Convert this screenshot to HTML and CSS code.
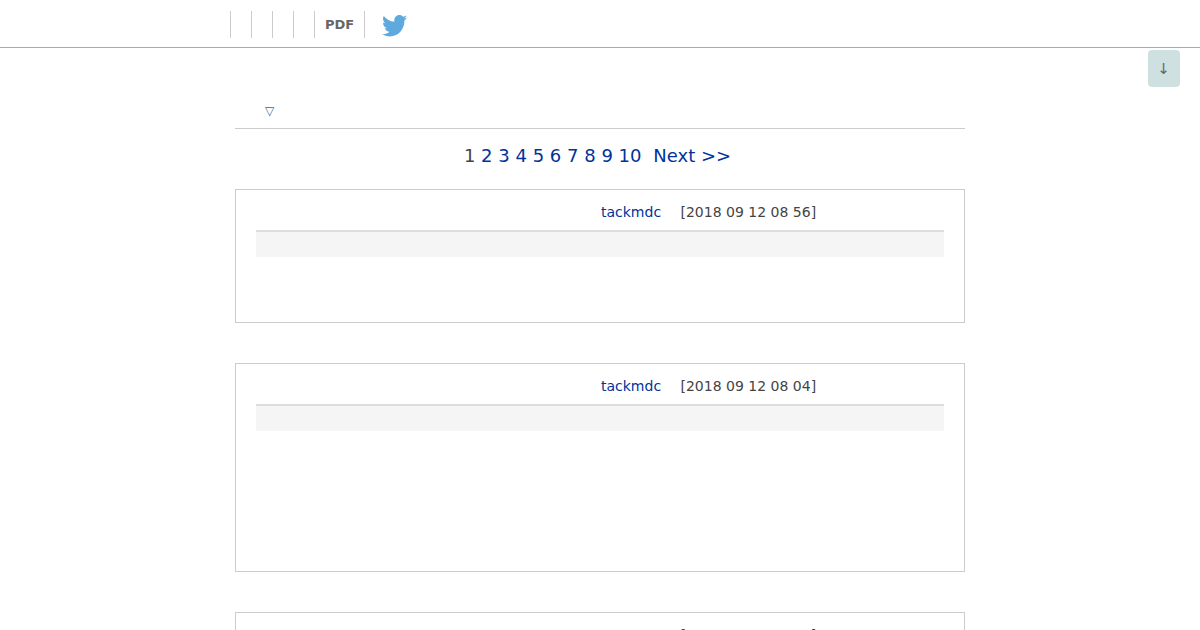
FILE: index.html
```html
<!DOCTYPE html>
<html lang="en">
<head>
<meta charset="utf-8">
<title>Forum</title>
<link rel="stylesheet" href="styles.css">
</head>
<body>
<header class="topbar">
  <nav class="topnav">
    <span class="cell"></span><span class="cell"></span><span class="cell"></span><span class="cell"></span>
    <span class="cell pdf">PDF</span>
    <span class="cell bird"><svg width="25" height="22" viewBox="0 0 24 20" preserveAspectRatio="none"><path fill="#5ea9dd" d="M24 2.4c-.9.4-1.8.7-2.8.8 1-.6 1.800-1.600 2.200-2.700-1 .6-2 1-3.100 1.200C19.300.700 18 .1 16.700.1c-2.700 0-4.900 2.200-4.900 4.900 0 .4 0 .8.100 1.100C7.800 5.900 4.200 4 1.700.9 1.200 1.600 1 2.500 1 3.400c0 1.700.9 3.200 2.200 4.100-.8 0-1.600-.2-2.200-.6v.1c0 2.400 1.700 4.400 3.900 4.800-.4.100-.8.200-1.300.2-.3 0-.6 0-.9-.1.600 2 2.400 3.400 4.600 3.400-1.700 1.300-3.800 2.100-6.100 2.100-.4 0-.8 0-1.200-.1 2.200 1.400 4.800 2.200 7.500 2.200 9.100 0 14-7.500 14-14v-.6c1-.7 1.800-1.600 2.500-2.500z"/></svg></span>
  </nav>
</header>
<button class="jump">↓</button>
<main class="page">
  <div class="sort"><span class="tri">▽</span></div>
  <div class="pager"><span>1</span> <a>2</a> <a>3</a> <a>4</a> <a>5</a> <a>6</a> <a>7</a> <a>8</a> <a>9</a> <a>10</a> <a class="next">Next &gt;&gt;</a></div>
  <article class="post short">
    <div class="meta"><a class="author">tackmdc</a><span>[2018 09 12 08 56]</span></div>
    <div class="band"></div>
  </article>
  <article class="post tall">
    <div class="meta"><a class="author">tackmdc</a><span>[2018 09 12 08 04]</span></div>
    <div class="band"></div>
  </article>
  <article class="post tall">
    <div class="meta"><a class="author"></a><span>[2018 09 12 08 00]</span></div>
    <div class="band"></div>
  </article>
</main>
</body>
</html>
```
FILE: styles.css
```css
html, body { margin: 0; padding: 0; height: 630px; overflow: hidden; background: #fff; font-family: "DejaVu Sans", sans-serif; }
.topbar { height: 47px; border-bottom: 1px solid #aaa; }
.topnav { display: flex; padding: 11px 0 0 230px; height: 27px; }
.cell { width: 20px; height: 27px; border-left: 1px solid #ccc; }
.pdf { width: auto; padding: 0 10px; font-size: 13px; font-weight: bold; color: #666; line-height: 27px; }
.bird { width: auto; padding: 0 0 0 17px; }
.bird svg { display: block; margin-top: 4px; }
.jump { position: absolute; top: 50px; left: 1148px; width: 32px; height: 37px; border: 0; border-radius: 4px; background: #cfe0e0; color: #666; font: 15px "DejaVu Sans", sans-serif; padding: 0 1px 0 0; }
.page { width: 730px; margin: 0 auto; }
.sort { height: 80px; border-bottom: 1px solid #ccc; box-sizing: border-box; padding: 54px 0 0 30px; margin-top: 1px; }
.tri { color: #369; font-size: 12px; line-height: 16px; display: block; }
.pager { text-align: center; font-size: 18px; line-height: 22px; margin: 16px 0 22px; padding-right: 5px; color: #444; height: 22px; }
.pager a { color: #039; }
.pager .next { margin-left: 6px; }
.post { border: 1px solid #ccc; padding: 12px 20px 0; margin-bottom: 40px; box-sizing: border-box; }
.short { height: 134px; }
.tall { height: 209px; }
.meta { display: flex; gap: 19px; padding-left: 345px; font-size: 14px; line-height: 20px; height: 28px; border-bottom: 2px solid #ddd; color: #444; }
.author { color: #039; width: 60.5px; }
.band { height: 25px; background: #f5f5f5; }
```
